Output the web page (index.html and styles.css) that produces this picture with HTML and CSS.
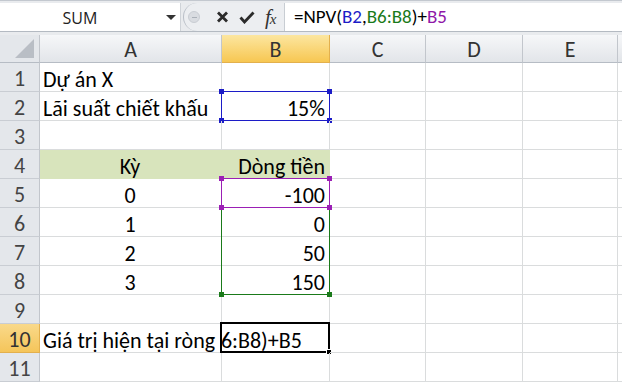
FILE: index.html
```html
<!doctype html>
<html>
<head>
<meta charset="utf-8">
<title>NPV</title>
<link rel="stylesheet" href="styles.css">
</head>
<body>
<div class="fbar">
	<div class="namebox"><span class="name">SUM</span><span class="arrow"></span></div>
	<div class="tools">
		<span class="knob"><span></span></span>
		<svg class="ico" width="13" height="12" viewBox="0 0 13 12"><path d="M2 1.5 L11 10.5 M11 1.5 L2 10.5" stroke="#2b2b2b" stroke-width="2.8" fill="none"/></svg>
		<svg class="ico" width="16" height="13" viewBox="0 0 16 13"><path d="M1.5 6.5 L5.5 11 L14.5 1.5" stroke="#2b2b2b" stroke-width="2.8" fill="none"/></svg>
		<span class="fx"><i>f</i><i class="sx">x</i></span>
	</div>
	<div class="formula">=NPV(<span class="r-blue">B2</span>,<span class="r-green">B6:B8</span>)+<span class="r-purple">B5</span></div>
</div>

<div class="sheet">
	<div class="hd corner"><span class="tri"></span></div>
	<div class="hd col">A</div>
	<div class="hd col sel">B</div>
	<div class="hd col">C</div>
	<div class="hd col">D</div>
	<div class="hd col">E</div>
	<div class="hd col last"></div>

	<div class="hd row">1</div>
	<div class="c">Dự án X</div>
	<div class="c"></div><div class="c"></div><div class="c"></div><div class="c"></div><div class="c last"></div>

	<div class="hd row">2</div>
	<div class="c">Lãi suất chiết khấu</div>
	<div class="c r">15%<span class="hl blue"><i class="tl"></i><i class="tr"></i><i class="bl"></i><i class="br"></i></span></div>
	<div class="c"></div><div class="c"></div><div class="c"></div><div class="c last"></div>

	<div class="hd row">3</div>
	<div class="c"></div><div class="c"></div><div class="c"></div><div class="c"></div><div class="c"></div><div class="c last"></div>

	<div class="hd row">4</div>
	<div class="c m fill">Kỳ</div>
	<div class="c r fill">Dòng tiền</div>
	<div class="c"></div><div class="c"></div><div class="c"></div><div class="c last"></div>

	<div class="hd row">5</div>
	<div class="c m">0</div>
	<div class="c r">-100<span class="hl purple"><i class="tl"></i><i class="tr"></i><i class="bl"></i><i class="br"></i></span></div>
	<div class="c"></div><div class="c"></div><div class="c"></div><div class="c last"></div>

	<div class="hd row">6</div>
	<div class="c m">1</div>
	<div class="c r">0<span class="hl green tall"><i class="tl"></i><i class="tr"></i><i class="bl"></i><i class="br"></i></span></div>
	<div class="c"></div><div class="c"></div><div class="c"></div><div class="c last"></div>

	<div class="hd row">7</div>
	<div class="c m">2</div>
	<div class="c r">50</div>
	<div class="c"></div><div class="c"></div><div class="c"></div><div class="c last"></div>

	<div class="hd row">8</div>
	<div class="c m">3</div>
	<div class="c r">150</div>
	<div class="c"></div><div class="c"></div><div class="c"></div><div class="c last"></div>

	<div class="hd row">9</div>
	<div class="c"></div><div class="c"></div><div class="c"></div><div class="c"></div><div class="c"></div><div class="c last"></div>

	<div class="hd row sel">10</div>
	<div class="c">Giá trị hiện tại ròng</div>
	<div class="c active"><span class="edit">B6:B8)+B5</span><span class="cur"><i></i></span></div>
	<div class="c"></div><div class="c"></div><div class="c"></div><div class="c last"></div>

	<div class="hd row">11</div>
	<div class="c"></div><div class="c"></div><div class="c"></div><div class="c"></div><div class="c"></div><div class="c last"></div>
</div>
</body>
</html>
```

FILE: styles.css
```css
*{ margin:0; padding:0; box-sizing:border-box;}
html,body{ width:622px; height:388px; overflow:hidden; background:#fff;}
body{ font-family:Carlito, Calibri, Lato, sans-serif; color:#000;}

/* formula bar */
.fbar{
	height:35px;
	display:flex;
	background:#e9ebee;
	border-top:1px solid #c3c8cf;
	padding:2px 0 4px;
	position:relative;
}
.fbar:after{
	content:'';
	position:absolute; left:0; right:0; bottom:3px;
	border-bottom:1px solid #b4bac2;
}
.namebox{
	width:181px;
	background:#fff;
	display:flex;
	align-items:center;
	position:relative;
	border-right:1px solid #cfd3d8;
}
.name{
	width:160px;
	text-align:center;
	font-family:"Open Sans", "DejaVu Sans", sans-serif;
	font-size:16px;
	color:#222;
	padding-top:1px;
}
.arrow{
	position:absolute; left:166px; top:12px;
	border-left:5px solid transparent;
	border-right:5px solid transparent;
	border-top:5px solid #333;
}
.tools{
	width:102px;
	display:flex;
	align-items:center;
	background:#eceef1;
	border-left:1px solid #b9bfc7;
	border-radius:14px 0 0 14px;
	margin-left:2px;
	padding-left:4px;
	border-right:1px solid #c8cdd3;
}
.knob{
	width:12px; height:12px;
	border-radius:50%;
	background:#d9dce1;
	border:1px solid #c9cdd3;
	display:flex; align-items:center; justify-content:center;
	margin-right:16px;
}
.knob span{ width:5px; height:1px; background:#aab0b8;}
.ico{ margin-right:10px;}
.ico + .ico{ margin-right:10px;}
.fx{
	font-family:"Liberation Serif", serif;
	font-size:21px;
	color:#333;
	line-height:1;
}
.fx .sx{ font-size:15px; margin-left:-1px;}
.formula{
	flex:1;
	background:#fff;
	font-size:19px;
	line-height:27px;
	padding-left:9px;
	white-space:nowrap;
}
.r-blue{ color:#1c1cc7;}
.r-green{ color:#1a7a1a;}
.r-purple{ color:#8f18a8;}

/* sheet grid */
.sheet{
	display:grid;
	grid-template-columns:40px 182px 108px 96px 97px 95px 1fr;
	grid-template-rows:28px repeat(11, 29px);
}
.c{
	border-right:1px solid #dadcdd;
	border-bottom:1px solid #dadcdd;
	font-size:22px;
	line-height:23px;
	display:flex;
	align-items:flex-end;
	padding:0 4px 0 3px;
	white-space:nowrap;
	position:relative;
}
.c.r{ justify-content:flex-end;}
.c.m{ justify-content:center;}
.c.fill{ background:#d8e4bc; border-color:#d8e4bc;}
.c.last{ border-right:none;}

.hd{
	background:linear-gradient(#f6f7f9, #e2e5e9);
	border-right:1px solid #c2c6cc;
	border-bottom:1px solid #b6bcc4;
	color:#333;
	font-size:22px;
	display:flex;
	align-items:center;
	justify-content:center;
}
.hd.col{ padding-top:1px;}
.hd.col.last{ border-right:none;}
.hd.row{
	background:#e4e7eb;
	border-bottom:1px solid #c9cdd3;
	color:#444;
	padding-top:3px;
}
.hd.sel{
	background:linear-gradient(#fce6a0, #f7c752);
	border-color:#e3b04d;
	color:#333;
}
.hd.row.sel{ background:linear-gradient(#f9d98a, #f5c55a);}
.corner{ position:relative; background:#e4e7eb;}
.tri{
	position:absolute; right:5px; bottom:4px;
	border-left:19px solid transparent;
	border-bottom:19px solid #b9bec5;
}

/* range highlights */
.hl{
	position:absolute;
	left:-1px; top:-1px;
	width:109px; height:30px;
	border:1px solid;
	pointer-events:none;
}
.hl.tall{ height:88px;}
.hl i{ position:absolute; width:5px; height:5px; background:currentColor;}
.hl .tl{ left:-3px; top:-3px;}
.hl .tr{ right:-3px; top:-3px;}
.hl .bl{ left:-3px; bottom:-3px;}
.hl .br{ right:-3px; bottom:-3px;}
.blue{ color:#1c1cc7;}
.purple{ color:#9b1fb5; z-index:2;}
.green{ color:#1a7a1a; z-index:1;}

.active{ padding-left:0;}
.edit{ display:block; overflow:hidden; width:100%; text-indent:-13px;}
.cur{
	position:absolute;
	left:-2px; top:-2px; right:-1px; bottom:-1px;
	border:2px solid #000;
}
.cur i{
	position:absolute; right:-4px; bottom:-4px;
	width:6px; height:6px;
	background:#000;
	border:1px solid #fff;
}
```
